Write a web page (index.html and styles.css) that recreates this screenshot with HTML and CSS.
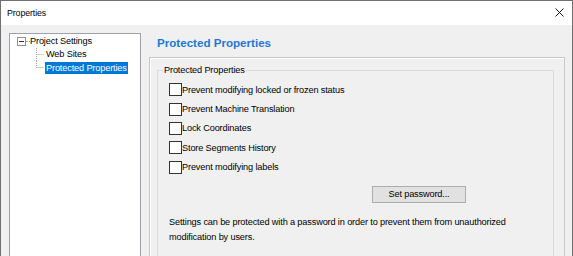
FILE: index.html
```html
<!DOCTYPE html>
<html>
<head>
<meta charset="utf-8">
<link rel="stylesheet" href="styles.css">
</head>
<body>
<div class="window">
  <div class="titlebar">
    <span class="title">Properties</span>
    <svg class="close" width="9" height="9" viewBox="0 0 9 9"><path d="M0.5 0.5 L8.5 8.5 M8.5 0.5 L0.5 8.5" stroke="#1a1a1a" stroke-width="1" fill="none"/></svg>
  </div>
  <div class="main">
    <div class="tree">
      <div class="node root">
        <span class="toggle"></span><span class="stub"></span><span class="label">Project Settings</span>
      </div>
      <div class="node child">
        <svg class="conn" width="9" height="13" viewBox="0 0 9 13"><path d="M0.5 0 V13 M0.5 6.5 H8" stroke="#a0a0a0" stroke-dasharray="1 1" fill="none"/></svg><span class="label">Web Sites</span>
      </div>
      <div class="node child">
        <svg class="conn" width="9" height="13" viewBox="0 0 9 13"><path d="M0.5 0 V6.5 M0.5 6.5 H8" stroke="#a0a0a0" stroke-dasharray="1 1" fill="none"/></svg><span class="label selected">Protected Properties</span>
      </div>
    </div>
    <div class="content">
      <h1 class="heading">Protected Properties</h1>
      <div class="panel">
        <fieldset class="group">
          <legend class="legend">Protected Properties</legend>
          <div class="checks">
            <label class="check"><span class="box"></span>Prevent modifying locked or frozen status</label>
            <label class="check"><span class="box"></span>Prevent Machine Translation</label>
            <label class="check"><span class="box"></span>Lock Coordinates</label>
            <label class="check"><span class="box"></span>Store Segments History</label>
            <label class="check"><span class="box"></span>Prevent modifying labels</label>
          </div>
          <div class="btnrow"><button class="btn">Set password...</button></div>
          <p class="desc">Settings can be protected with a password in order to prevent them from unauthorized modification by users.</p>
        </fieldset>
      </div>
    </div>
  </div>
</div>
</body>
</html>
```
FILE: styles.css
```css
html, body {
  margin: 0;
  padding: 0;
  background: #6e6e6e;
}
body {
  width: 573px;
  height: 256px;
  overflow: hidden;
  font-family: "Liberation Sans", Arial, sans-serif;
  font-size: 9.2px;
  letter-spacing: -0.15px;
  color: #000;
}
.window {
  box-sizing: border-box;
  width: 573px;
  height: 256px;
  border: 1px solid #707070;
  border-bottom: none;
  background: #f0f0f0;
  display: flex;
  flex-direction: column;
}
.titlebar {
  height: 24px;
  flex: none;
  background: #fff;
  display: flex;
  align-items: center;
  justify-content: space-between;
  padding: 0 8px 0 6px;
}
.title {
  font-size: 8.8px;
  letter-spacing: -0.1px;
}
.close {
  margin-top: -1px;
}
.main {
  flex: 1;
  display: flex;
  padding: 8px 0 0 8px;
  gap: 8px;
  min-height: 0;
}
.tree {
  width: 132px;
  box-sizing: border-box;
  border: 1px solid #a0a0a8;
  border-bottom: none;
  background: #fff;
  padding: 1px 0 0 6px;
  white-space: nowrap;
}
.node {
  height: 13px;
  display: flex;
  align-items: center;
  line-height: 13px;
}
.toggle {
  box-sizing: border-box;
  width: 9px;
  height: 9px;
  border: 1px solid #919191;
  margin-left: 1px;
  background: linear-gradient(#333, #333) center / 5px 1px no-repeat #fff;
}
.stub {
  width: 4px;
  height: 1px;
  border-top: 1px dotted #a0a0a0;
}
.child {
  padding-left: 20px;
}
.conn {
  flex: none;
}
.label {
  padding: 0 1px;
}
.root .label {
  padding: 0;
}
.selected {
  background: #0078d7;
  color: #fff;
  height: 12px;
  line-height: 12px;
}
.content {
  width: 416px;
  display: flex;
  flex-direction: column;
}
.heading {
  margin: 0 0 4px 8px;
  font-size: 11.6px;
  line-height: 20px;
  font-weight: bold;
  color: #1f77d4;
  letter-spacing: 0;
}
.panel {
  flex: 1;
  border: 1px solid #c8c8c8;
  border-bottom: none;
  box-shadow: inset 1px 1px 0 #fff;
  padding: 5px 10px 0 7px;
}
.group {
  margin: 0;
  height: 100%;
  box-sizing: border-box;
  border: 1px solid #dcdcdc;
  border-bottom: none;
  padding: 0 10px 0 5px;
  min-width: 0;
}
.legend {
  padding: 0 1px;
  line-height: 14px;
}
.checks {
  margin: 3px 0 0 6px;
  display: flex;
  flex-direction: column;
}
.check {
  height: 19.4px;
  display: flex;
  align-items: center;
}
.box {
  box-sizing: border-box;
  width: 13px;
  height: 13px;
  border: 1px solid #333;
  background: #fff;
  margin-right: 0;
}
.btnrow {
  margin: 9px 0 0 209px;
  display: flex;
}
.btn {
  width: 94px;
  height: 17px;
  padding: 0;
  border: 1px solid #adadad;
  background: #e1e1e1;
  font: inherit;
  letter-spacing: inherit;
  color: #000;
}
.desc {
  margin: 12px 0 0 6px;
  line-height: 15px;
}
```
